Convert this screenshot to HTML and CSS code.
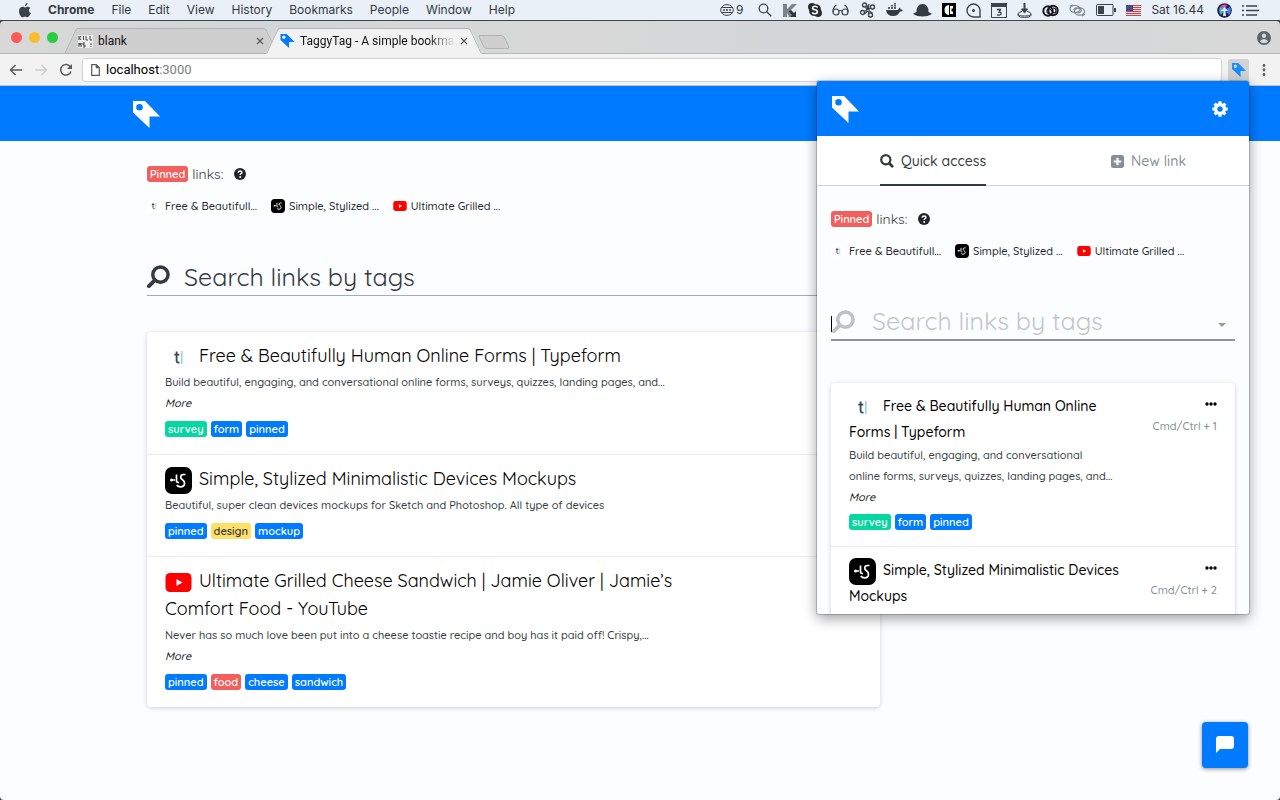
FILE: index.html
```html
<!DOCTYPE html>
<html lang="en">
<head>
<meta charset="utf-8">
<title>TaggyTag - A simple bookmarking tool</title>
<link rel="stylesheet" href="styles.css">
</head>
<body>
<svg class="sprite" aria-hidden="true">
  <symbol id="tag" viewBox="0 0 27 27"><path fill="currentColor" fill-rule="evenodd" d="M0 0h12L27 15.500H16.500V27L0 11.500zM6.500 3a3.300 3.300 0 1 0 0 6.600 3.300 3.300 0 0 0 0-6.600z"/></symbol>
  <symbol id="help" viewBox="0 0 12 12"><circle cx="6" cy="6" r="6" fill="#212529"/><path d="M4.200 4.600c.1-2 3.700-2 3.700 0 0 1.200-1.700 1.100-1.700 2.400" fill="none" stroke="#fff" stroke-width="1.500"/><circle cx="6.200" cy="9" r="1" fill="#fff"/></symbol>
  <symbol id="typeform" viewBox="0 0 27 27"><path fill="#fff" d="M0 0h27v27H0z"/><path d="M11.600 7.500v9.200q0 2.300 2.900 1.800M9.300 10.700h5" fill="none" stroke="#3c4650" stroke-width="1.800"/><path d="M16.800 7v13" stroke="#8fd0cf" stroke-width="1.400"/></symbol>
  <symbol id="ls" viewBox="0 0 27 27"><rect width="27" height="27" rx="7"/><circle cx="6.500" cy="13" r="1.500" fill="#fff"/><path d="M7 13h3M11.500 7.500V14q0 1.500 2.500 1.500M20.500 7.500h-1.800q-3 0-3 2.600 0 1.600 1.800 2.700 2 1.200 2 3.400 0 3.600-4 3.600-2.600 0-3.700-1.800" fill="none" stroke="#fff" stroke-width="1.700"/></symbol>
  <symbol id="youtube" viewBox="0 0 27 27"><rect x=".5" y="4" width="26" height="19" rx="4.500" fill="#f00"/><path d="M11.500 10v7l6-3.500z" fill="#fff"/></symbol>
  <symbol id="find" viewBox="0 0 24 24"><circle cx="14" cy="10" r="8" fill="none" stroke="currentColor" stroke-width="3.600"/><path d="m8 16-6 6" stroke="currentColor" stroke-width="4" stroke-linecap="round"/></symbol>
  <symbol id="close" viewBox="0 0 8 8"><path d="m1 1 6 6M7 1 1 7" stroke="#5a5a5a" stroke-width="1.200"/></symbol>
  <symbol id="dots" viewBox="0 0 12 4"><circle cx="2" cy="2" r="1.700"/><circle cx="6" cy="2" r="1.700"/><circle cx="10" cy="2" r="1.700"/></symbol>
</svg>

<div class="menubar">
  <nav class="menus">
    <svg class="apple" viewBox="0 0 12 15"><path fill="#3c434a" d="M8.600 0c.1 1.500-1.200 3-2.700 3C5.800 1.500 7.100.200 8.600 0zM11.300 5c-2 1.300-1.700 4.100.5 5-.6 1.700-2 4.300-3.400 4.300-1 0-1.200-.6-2.400-.6s-1.500.6-2.400.6C1.900 14.300 0 11 0 8.200c0-3.700 3.200-5.200 5.500-3.900.6.3.9.3 1.500 0 1.500-.8 3.300-.5 4.300.7z"/></svg>
    <b>Chrome</b><span>File</span><span>Edit</span><span>View</span><span>History</span><span>Bookmarks</span><span>People</span><span>Window</span><span>Help</span>
  </nav>
  <div class="status">
    <span class="count"><svg width="14" height="12" viewBox="0 0 14 12" fill="none" stroke="#3c434a"><ellipse cx="7" cy="6" rx="6.300" ry="5.400"/><path d="M2 3.500h10M2 8.500h10"/><path d="M3 6h8" stroke-width="1.400" stroke-dasharray="2 1"/></svg>9</span>
    <svg width="14" height="14" viewBox="0 0 14 14" fill="none" stroke="#3c434a" stroke-width="1.300"><circle cx="5.500" cy="5.500" r="4.300"/><path d="m8.700 8.700 4.600 4.600"/></svg>
    <svg width="16" height="15" viewBox="0 0 16 15"><path fill="#7d848a" d="M1 1h4v5l5-5h5L8 8l3 6H7L5 10v4H1z"/><path fill="#30363c" d="m7 8 2-1 3 3 2-2v6H8l2-2-3-3z"/></svg>
    <svg width="14" height="14" viewBox="0 0 14 14"><path fill="#272d33" d="M1 1q3-2 6 0 6 0 6 6 2 3 0 6-3 2-6 0-6 0-6-6-2-3 0-6z"/><path d="M9.600 4.500Q8.800 3.300 7 3.300q-2.400 0-2.400 1.700 0 1.400 2.400 1.800t2.400 2q0 1.900-2.400 1.900-2 0-2.700-1.400" fill="none" stroke="#fff" stroke-width="1.600"/></svg>
    <svg width="17" height="12" viewBox="0 0 17 12" fill="none" stroke="#3c434a" stroke-width="1.200"><circle cx="4" cy="8" r="3"/><circle cx="13" cy="8" r="3"/><path d="M7 7q1.500-1 3 0M1 8q0-5 3.500-7M16 8q0-5-3.500-7"/></svg>
    <svg width="17" height="16" viewBox="0 0 17 16" fill="none" stroke="#3c434a" stroke-width="1.300"><circle cx="5.500" cy="3" r="2"/><circle cx="13.500" cy="5" r="2"/><circle cx="3.500" cy="10.500" r="2"/><circle cx="11.500" cy="13" r="2"/><path d="m6.500 5 3.800 6.500M11.700 6l-6.500 3.500M5 12q3-1 3.500-4.500T7.500 3M13.500 11Q8 9 10 2"/></svg>
    <svg width="17" height="14" viewBox="0 0 17 14"><path fill="#333a40" d="M0 7h12q.5-2 2-2.500.5 1 .5 2 1.500-.3 2.500.5-1 1.500-3 1.500Q12 13 7 13 1 13 0 7z"/><path fill="#555d64" d="M2 4h2v2H2zM5 4h2v2H5zM8 4h2v2H8zM5 2h2v1.500H5zM8 2h2v1.500H8zM8 0h2v1.400H8z"/></svg>
    <svg width="19" height="14" viewBox="0 0 19 14"><path fill="#343b42" d="M3.500 9q0-8 6-8t6 8q2 1 3.500 2-4 2.500-9.500 2.500T0 11q1.500-1 3.500-2z"/></svg>
    <svg width="14" height="14" viewBox="0 0 14 14"><path d="M0 0h14v14H0z"/><path fill="#fff" d="M7 2v10q-4.500-.5-4.500-5T7 2zM8 3h3v2.500H9.500v3H11V11H8z"/></svg>
    <svg width="15" height="15" viewBox="0 0 15 15" fill="none" stroke="#3c434a" stroke-width="1.400"><path d="M14 14V7.500A6.500 6.500 0 1 0 7.500 14z"/><circle cx="7.500" cy="7.500" r=".8"/></svg>
    <svg width="16" height="15" viewBox="0 0 16 15"><path fill="none" stroke="#3c434a" d="M.5.500h15v14H.5z"/><path fill="#3c434a" d="M0 0h16v4H0z"/><path d="M6 6.500h3.500L8 9q2 0 2 1.700T6 12" fill="none" stroke="#3c434a" stroke-width="1.300"/></svg>
    <svg width="15" height="15" viewBox="0 0 15 15" fill="none" stroke="#3c434a"><path d="M5 8.500q-4 .5-4 2.500t6.500 2 6.500-2-4-2.500M1 11v1.500q1 2 6.500 2t6.500-2V11"/><path d="M7.500 0v8" stroke-width="2"/><path fill="#3c434a" d="M4.500 6h6l-3 4z"/></svg>
    <svg width="17" height="13" viewBox="0 0 17 13" fill="none" stroke="#16191c"><circle cx="6" cy="7" r="4.700" stroke-width="2"/><circle cx="11" cy="6.500" r="4.700" stroke-width="2"/><path stroke-width="1.200" d="M8 9.500Q5 10 5 7t3-2l4 4q2 0 2-2.500T11 4"/></svg>
    <svg width="17" height="13" viewBox="0 0 17 13" fill="none" stroke="#7c858c" stroke-width="1.200"><ellipse cx="6" cy="5" rx="5" ry="3.500"/><ellipse cx="10.500" cy="7.500" rx="5" ry="3.700"/><path d="M5 6q0-2.500 4-2t3 3-5 1.500M1 2l3-1M13 12l3-2"/></svg>
    <svg width="20" height="12" viewBox="0 0 20 12"><rect x=".5" y=".5" width="16.500" height="11" rx="1" fill="none" stroke="#3c434a"/><path fill="#3c434a" d="M2 2h6v8H2zM18 4h2v4h-2z"/></svg>
    <svg width="15" height="11" viewBox="0 0 15 11"><path fill="#f3e4e6" d="M0 0h15v11H0z"/><path stroke="#c8414d" d="M0 .5h15M0 2.500h15M0 4.500h15M0 6.500h15M0 8.500h15M0 10.500h15"/><path fill="#434d83" d="M0 0h7v6H0z"/></svg>
    <span class="clock">Sat 16.44</span>
    <svg width="15" height="15" viewBox="0 0 15 15"><circle cx="7.500" cy="7.500" r="7.300" fill="#28204a"/><path fill="#d94fae" d="M7.500 7 3 4q3-3.500 7-2z"/><path fill="#427df0" d="M7.500 7 13 4q2 4-1 8z"/><path fill="#35c3d7" d="M7.500 7 3 4q-2 4 1 8z"/><path fill="#d9e9ff" d="m7.500 4 3.500 4H8.500l.5 5H6l.5-5H4z"/></svg>
    <svg width="17" height="11" viewBox="0 0 17 11" stroke="#3c434a" stroke-width="1.300"><path d="M0 1h2M0 5.500h2M0 10h2M4 1h11M4 5.500h13M4 10h11"/></svg>
  </div>
</div>

<div class="window">
  <div class="tabstrip">
    <div class="lights"><i class="red"></i><i class="yellow"></i><i class="green"></i></div>
    <div class="tab">
      <svg class="favicon" viewBox="0 0 15 13"><path fill="#eee" d="M0 0h15v13H0z"/><path d="M1 1v4M3 1 1.500 3 3 5M5.500 1v4M8 1v4h2M12 1v4h2M1 12V8l1 2 1-2v4M7 8H5v2h2v2H5M13 8v2M13 11v1" fill="none" stroke="#333" stroke-width=".9"/></svg>
      <span class="label">blank</span>
      <button class="close" aria-label="Close tab"><svg><use href="#close"/></svg></button>
    </div>
    <div class="tab active">
      <svg class="favicon blue"><use href="#tag"/></svg>
      <span class="label fade">TaggyTag - A simple bookmark</span>
      <button class="close" aria-label="Close tab"><svg><use href="#close"/></svg></button>
    </div>
    <button class="newtab" aria-label="New tab"></button>
    <svg class="profile" viewBox="0 0 14 14"><circle cx="7" cy="7" r="7" fill="#636466"/><circle cx="7" cy="4.700" r="2.200" fill="#d8d9da"/><path fill="#d8d9da" d="M2.800 10.500Q4 8 7 8t4.200 2.500Q9.500 12.300 7 12.300t-4.200-1.800z"/></svg>
  </div>
  <div class="toolbar">
    <button aria-label="Back"><svg width="14" height="12" viewBox="0 0 14 12" fill="none" stroke="#5a5a5a" stroke-width="1.500"><path d="M13 6H1.500M6.500 1l-5 5 5 5"/></svg></button>
    <button aria-label="Forward"><svg width="14" height="12" viewBox="0 0 14 12" fill="none" stroke="#ccc" stroke-width="1.500"><path d="M1 6h11.500M7.500 1l5 5-5 5"/></svg></button>
    <button aria-label="Reload"><svg width="14" height="14" viewBox="0 0 14 14"><path d="M11.500 4A5.300 5.300 0 1 0 12 8.500" fill="none" stroke="#5a5a5a" stroke-width="1.500"/><path fill="#5a5a5a" d="M13 1v5H8z"/></svg></button>
    <div class="address">
      <svg width="9" height="12" viewBox="0 0 9 12" fill="none" stroke="#5a5a5a" stroke-width="1.200"><path d="M.7.700h4.600l3 3v7.600H.7zM5.300.700v3h3"/></svg>
      <span>localhost<em>:3000</em></span>
    </div>
    <button class="extension" aria-label="TaggyTag"><svg width="14" height="14"><use href="#tag"/></svg></button>
    <button aria-label="Menu"><svg width="14" height="12" viewBox="0 0 14 12" fill="#5a5a5a"><circle cx="7" cy="1.500" r="1.400"/><circle cx="7" cy="6" r="1.400"/><circle cx="7" cy="10.500" r="1.400"/></svg></button>
  </div>

  <div class="page">
    <header class="brand main-brand"><svg class="logo"><use href="#tag"/></svg></header>
    <main class="content">
      <div class="pinned"><span class="badge red">Pinned</span> links: <svg class="help"><use href="#help"/></svg></div>
      <div class="quick">
        <a href="#"><svg><use href="#typeform"/></svg>Free &amp; Beautifull...</a>
        <a href="#"><svg><use href="#ls"/></svg>Simple, Stylized ...</a>
        <a href="#"><svg><use href="#youtube"/></svg>Ultimate Grilled ...</a>
      </div>
      <div class="search">
        <svg class="find"><use href="#find"/></svg>
        <input type="text" aria-label="Search links by tags" placeholder="Search links by tags">
      </div>
      <div class="card">
        <article>
          <div class="text">
            <h2><svg><use href="#typeform"/></svg>Free &amp; Beautifully Human Online Forms | Typeform</h2>
            <p>Build beautiful, engaging, and conversational online forms, surveys, quizzes, landing pages, and...</p>
            <p><a class="more" href="#">More</a></p>
            <div class="tags"><span class="badge green">survey</span><span class="badge">form</span><span class="badge">pinned</span></div>
          </div>
        </article>
        <article>
          <div class="text">
            <h2><svg><use href="#ls"/></svg>Simple, Stylized Minimalistic Devices Mockups</h2>
            <p>Beautiful, super clean devices mockups for Sketch and Photoshop. All type of devices</p>
            <div class="tags"><span class="badge">pinned</span><span class="badge yellow">design</span><span class="badge">mockup</span></div>
          </div>
        </article>
        <article>
          <div class="text">
            <h2><svg><use href="#youtube"/></svg>Ultimate Grilled Cheese Sandwich | Jamie Oliver | Jamie’s Comfort Food - YouTube</h2>
            <p>Never has so much love been put into a cheese toastie recipe and boy has it paid off! Crispy,...</p>
            <p><a class="more" href="#">More</a></p>
            <div class="tags"><span class="badge">pinned</span><span class="badge red">food</span><span class="badge">cheese</span><span class="badge">sandwich</span></div>
          </div>
        </article>
      </div>
    </main>
    <button class="chat" aria-label="Open chat"><svg width="20" height="18" viewBox="0 0 20 18"><path fill="#fff" d="M4 0h12q3 0 3 3v7q0 3-3 3H5l-4 4V3q0-3 3-3z"/></svg></button>
  </div>
</div>

<section class="popup" aria-label="TaggyTag extension">
  <header class="brand">
    <svg class="logo"><use href="#tag"/></svg>
    <button aria-label="Settings"><svg width="16" height="16" viewBox="0 0 16 16"><circle cx="8" cy="8" r="4.300" fill="none" stroke="#fff" stroke-width="3.600"/><path stroke="#fff" stroke-width="3.200" d="M8 .3v3M8 12.700v3M.3 8h3M12.700 8h3M2.600 2.600l2 2M11.400 11.400l2 2M2.600 13.400l2-2M11.400 4.600l2-2"/><circle cx="8" cy="8" r="2.600" fill="#007bff"/></svg></button>
  </header>
  <nav class="switch">
    <button class="on"><svg width="14" height="14" viewBox="0 0 14 14" fill="none" stroke="#343a40"><circle cx="5.800" cy="5.800" r="4.600" stroke-width="2.200"/><path stroke-width="2.800" stroke-linecap="round" d="m9.500 9.500 2.700 2.700"/></svg>Quick access</button>
    <button><svg width="13" height="13" viewBox="0 0 13 13"><rect width="13" height="13" rx="2.500" fill="#868e96"/><path stroke="#fff" stroke-width="2.200" d="M6.500 2.700v7.600M2.700 6.500h7.600"/></svg>New link</button>
  </nav>
  <div class="body">
    <div class="pinned"><span class="badge red">Pinned</span> links: <svg class="help"><use href="#help"/></svg></div>
    <div class="quick">
      <a href="#"><svg><use href="#typeform"/></svg>Free &amp; Beautifull...</a>
      <a href="#"><svg><use href="#ls"/></svg>Simple, Stylized ...</a>
      <a href="#"><svg><use href="#youtube"/></svg>Ultimate Grilled ...</a>
    </div>
    <div class="search focused">
      <i class="cursor"></i>
      <svg class="find"><use href="#find"/></svg>
      <input type="text" aria-label="Search links by tags" placeholder="Search links by tags">
      <button class="drop" aria-label="Show tags"></button>
    </div>
    <div class="card">
      <article>
        <div class="text">
          <h2><svg><use href="#typeform"/></svg>Free &amp; Beautifully Human Online Forms | Typeform</h2>
          <p>Build beautiful, engaging, and conversational<br>online forms, surveys, quizzes, landing pages, and...</p>
          <p><a class="more" href="#">More</a></p>
          <div class="tags"><span class="badge green">survey</span><span class="badge">form</span><span class="badge">pinned</span></div>
        </div>
        <div class="side"><button aria-label="Options"><svg width="12" height="4"><use href="#dots"/></svg></button><span>Cmd/Ctrl + 1</span></div>
      </article>
      <article>
        <div class="text">
          <h2><svg><use href="#ls"/></svg>Simple, Stylized Minimalistic Devices Mockups</h2>
          <p>Beautiful, super clean devices mockups for Sketch and Photoshop. All type of devices</p>
        </div>
        <div class="side"><button aria-label="Options"><svg width="12" height="4"><use href="#dots"/></svg></button><span>Cmd/Ctrl + 2</span></div>
      </article>
    </div>
  </div>
</section>
</body>
</html>
```
FILE: styles.css
```css
* { box-sizing: border-box; }
body {
  margin: 0;
  height: 100vh;
  display: flex;
  flex-direction: column;
  position: relative;
  overflow: hidden;
  background: #3b474d;
  color: #343a40;
  font: 500 11px/20px Quicksand, Lato, sans-serif;
}
button { padding: 0; border: 0; background: none; font: inherit; color: inherit; display: flex; align-items: center; }
svg { flex: none; }
h2, p { margin: 0; }
.sprite { position: absolute; width: 0; height: 0; }

/* System menu bar */
.menubar {
  height: 20px;
  padding: 0 21px 0 19px;
  display: flex;
  align-items: center;
  justify-content: space-between;
  background: #e9f0f7;
  font: 12px/20px Inter, sans-serif;
  color: #33393f;
}
.menus { display: flex; align-items: center; gap: 17px; }
.apple { width: 12px; height: 15px; }
.status { display: flex; align-items: center; gap: 10px; }
.count { display: flex; align-items: center; gap: 2px; margin-right: 5px; }
.clock { margin-right: 3px; }

/* Browser window */
.window {
  flex: 1;
  margin-top: 1px;
  display: flex;
  flex-direction: column;
  border-radius: 4px;
  overflow: hidden;
}
.tabstrip {
  height: 33px;
  padding: 7px 9px 0 11px;
  display: flex;
  background: linear-gradient(90deg, #d8d8d8, #d2d6d8 20%, #d8d8d8 45%, #d2d6d8 65%, #d8d8d8);
  border-bottom: 1px solid #b8b8b8;
  font: 12px/20px Roboto, sans-serif;
  color: #111;
}
.lights { display: flex; gap: 7px; width: 59px; padding-top: 4px; }
.lights i { width: 11px; height: 11px; border-radius: 50%; }
.lights .red { background: #fc5b57; }
.lights .yellow { background: #fdbc2f; }
.lights .green { background: #29cc41; }
.tab {
  position: relative;
  z-index: 0;
  width: 202px;
  height: 26px;
  padding: 0 8px;
  display: flex;
  align-items: center;
  gap: 5px;
}
.tab::before, .tab::after {
  content: "";
  position: absolute;
  z-index: -1;
  top: 0;
  bottom: 0;
  width: 58%;
  background: #cfcfcf;
  border: 1px solid #b2b2b2;
}
.tab::before { left: 0; transform: skewX(-25deg); border-right: 0; border-top-left-radius: 3px; }
.tab::after { right: 0; transform: skewX(25deg); border-left: 0; border-top-right-radius: 3px; }
.tab.active { z-index: 1; width: 204px; }
.tab.active::before, .tab.active::after { background: #f2f2f2; border-bottom-color: #f2f2f2; }
.favicon { width: 15px; height: 13px; }
.favicon.blue { height: 14px; color: #007bff; }
.label { flex: 1; overflow: hidden; white-space: nowrap; }
.fade { -webkit-mask-image: linear-gradient(90deg, #000 82%, transparent); mask-image: linear-gradient(90deg, #000 82%, transparent); }
.close svg { width: 8px; height: 8px; }
.newtab { width: 26px; height: 14px; margin: 7px 0 0 5px; background: #cfcfcf; border: 1px solid #b2b2b2; border-radius: 3px; transform: skewX(25deg); }
.profile { width: 14px; height: 14px; margin: 3px 0 0 auto; }

.toolbar {
  height: 32px;
  padding: 0 9px;
  display: flex;
  align-items: center;
  gap: 11px;
  background: #f2f2f2;
  border-bottom: 1px solid #c4c4c4;
}
.address {
  flex: 1;
  height: 24px;
  margin: 0 -5px 0 -2px;
  padding: 0 8px;
  display: flex;
  align-items: center;
  gap: 6px;
  background: #fff;
  border: 1px solid #d2d2d2;
  border-radius: 3px;
  font: 13px/20px Roboto, sans-serif;
  color: #000;
}
.address em { font-style: normal; color: #808080; }
.extension { width: 21px; height: 22px; justify-content: center; background: #d2d2d2; border-radius: 2px; color: #1a8cff; margin-right: -3px; }

/* Page */
.page { flex: 1; position: relative; background: #fcfdff; }
.brand {
  height: 55px;
  padding: 0 21px 0 15px;
  display: flex;
  align-items: center;
  justify-content: space-between;
  background: #007bff;
}
.main-brand { padding-left: 133px; }
.logo { width: 27px; height: 27px; margin-top: 2px; color: #fff; }
.content { max-width: 880px; padding: 21px 0 0 147px; }

.pinned { display: flex; align-items: center; gap: 4px; font-size: 14px; line-height: 24px; font-weight: 400; }
.badge {
  padding: 0 3px;
  border-radius: 3px;
  background: #007bff;
  color: #fff;
  font-size: 11px;
  line-height: 16px;
  font-weight: 600;
}
.badge.red { background: #f25f5c; }
.badge.green { background: #06d6a0; }
.badge.yellow { background: #ffe066; color: #343a40; }
.help { width: 12px; height: 12px; margin-left: 7px; }
.quick { margin-top: 9px; display: flex; gap: 14px; line-height: 22px; }
.quick a { display: flex; align-items: center; gap: 4px; color: #212529; text-decoration: none; white-space: nowrap; }
.quick svg { width: 14px; height: 14px; }

.search {
  margin-top: 41px;
  height: 38px;
  display: flex;
  align-items: center;
  gap: 14px;
  border-bottom: 1px solid #a9acaf;
}
.find { width: 23px; height: 23px; }
.search input {
  flex: 1;
  min-width: 0;
  height: 36px;
  padding: 0;
  border: 0;
  outline: 0;
  background: none;
  font: 400 25px/36px Quicksand, Lato, sans-serif;
  color: #343a40;
}
.search input::placeholder { color: #343a40; opacity: 1; }

.card { margin-top: 36px; background: #fff; border-radius: 4px; box-shadow: 0 1px 4px rgba(40, 50, 90, .22); }
article { padding: 10px 18px 11px; display: flex; justify-content: space-between; }
article + article { border-top: 1px solid #ebecee; }
.text { max-width: 520px; }
h2 { margin-bottom: 2px; font-size: 18px; line-height: 28px; font-weight: 400; color: #000; }
h2 svg { width: 27px; height: 27px; margin-right: 7px; vertical-align: middle; margin-top: -4px; margin-bottom: -4px; }
.text p { line-height: 21px; }
.more { color: #212529; font-style: italic; text-decoration: none; }
.tags { height: 29px; display: flex; align-items: center; gap: 4px; }

.chat {
  position: absolute;
  right: 32px;
  bottom: 32px;
  width: 46px;
  height: 46px;
  justify-content: center;
  background: #007bff;
  border-radius: 4px;
  box-shadow: 0 1px 4px rgba(0, 0, 0, .45);
}

/* Extension popup */
.popup {
  position: absolute;
  top: 81px;
  right: 31px;
  width: 432px;
  height: 533px;
  overflow: hidden;
  background: #fcfdff;
  border-radius: 2px;
  box-shadow: 0 0 0 1px rgba(0, 0, 0, .18), 0 4px 14px rgba(0, 0, 0, .4);
}
.switch {
  height: 50px;
  display: flex;
  justify-content: center;
  gap: 125px;
  background: #fff;
  border-bottom: 1px solid #ced4da;
  font-size: 14px;
  color: #868e96;
}
.switch button { height: 50px; padding-top: 2px; gap: 7px; border-bottom: 2px solid transparent; }
.switch .on { color: #343a40; border-color: #343a40; }
.body { padding: 21px 14px 0; }
.focused { height: 38px; border-bottom: 2px solid #909396; }
.focused .find { color: #bfc1c3; }
.focused input::placeholder { color: #c4c6c8; }
.focused { gap: 0; }
.focused input { padding-left: 17px; }
.cursor { width: 1px; height: 16px; margin-top: 6px; background: #000; }
.drop { margin: 8px 9px 0 0; border: 4px solid transparent; border-top-color: #999; border-bottom: 0; }
.popup .card { margin-top: 42px; }
.popup h2 { margin-bottom: 0; font-size: 14px; line-height: 26px; font-weight: 500; }
.popup .text { flex: 0 1 275px; }
.popup .tags { height: 27px; }
.side { display: flex; flex-direction: column; align-items: flex-end; gap: 10px; padding-top: 9px; white-space: nowrap; color: #868e96; }
```
